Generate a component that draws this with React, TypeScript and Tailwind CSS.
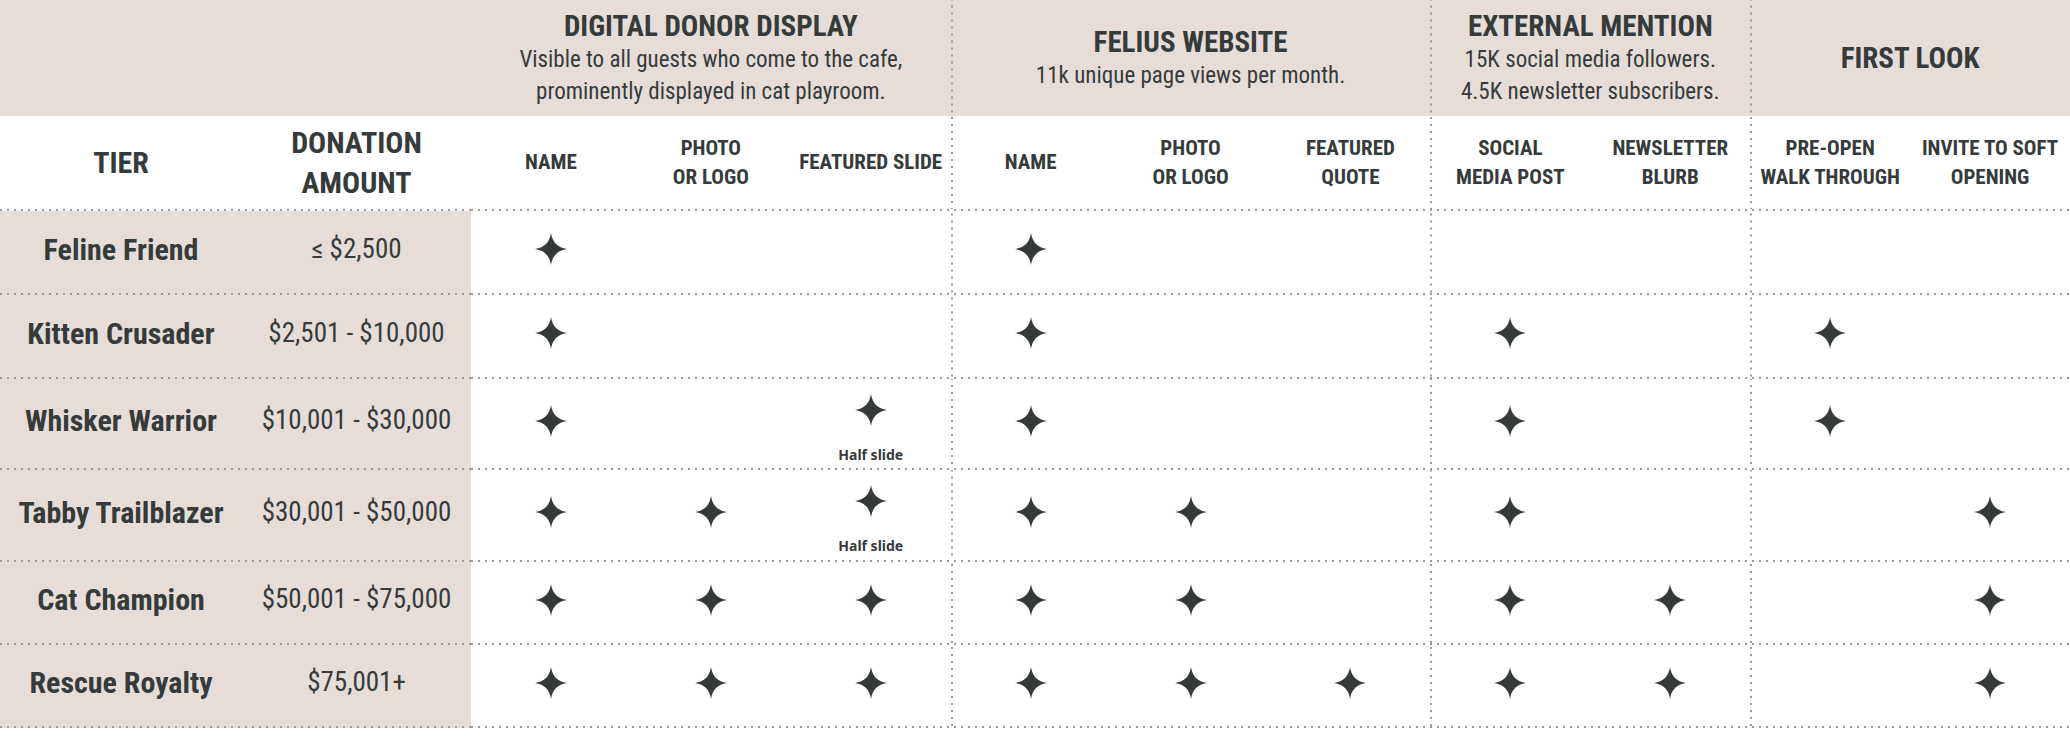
import { Fragment } from "react"

const font = { fontFamily: '"Roboto Condensed", "Liberation Sans Narrow", "DejaVu Sans Condensed", Roboto, sans-serif' }

type Mark = 0 | 1 | "half"

const rows: { tier: string; amount: string; h: string; cells: Mark[] }[] = [
    { tier: "Feline Friend", amount: "≤ $2,500", h: "h-[82px]", cells: [1, 0, 0, 1, 0, 0, 0, 0, 0, 0] },
    { tier: "Kitten Crusader", amount: "$2,501 - $10,000", h: "h-[82px]", cells: [1, 0, 0, 1, 0, 0, 1, 0, 1, 0] },
    { tier: "Whisker Warrior", amount: "$10,001 - $30,000", h: "h-[89px]", cells: [1, 0, "half", 1, 0, 0, 1, 0, 1, 0] },
    { tier: "Tabby Trailblazer", amount: "$30,001 - $50,000", h: "h-[90px]", cells: [1, 1, "half", 1, 1, 0, 1, 0, 0, 1] },
    { tier: "Cat Champion", amount: "$50,001 - $75,000", h: "h-[81px]", cells: [1, 1, 1, 1, 1, 0, 1, 1, 0, 1] },
    { tier: "Rescue Royalty", amount: "$75,001+", h: "h-[81px]", cells: [1, 1, 1, 1, 1, 1, 1, 1, 0, 1] },
]

const subHeads = [
    ["NAME"], ["PHOTO", "OR LOGO"], ["FEATURED SLIDE"],
    ["NAME"], ["PHOTO", "OR LOGO"], ["FEATURED", "QUOTE"],
    ["SOCIAL", "MEDIA POST"], ["NEWSLETTER", "BLURB"],
    ["PRE-OPEN", "WALK THROUGH"], ["INVITE TO SOFT", "OPENING"],
]

// columns that start a new group get a dotted rule on the left
const groupStart = [3, 6, 8]
const vline = "bg-[image:linear-gradient(to_bottom,#9b9b9b_2px,transparent_2px)] bg-[length:2px_7px] bg-repeat-y bg-left"
const cols = "grid grid-cols-[242px_229px_repeat(10,minmax(0,1fr))]"

function Star() {
    return (
        <svg width="32" height="32" viewBox="0 0 32 32" className="text-[#343a3a]">
            <path d="M16 0 Q18 14 32 16 Q18 18 16 32 Q14 18 0 16 Q14 14 16 0Z" fill="currentColor" />
        </svg>
    )
}

function Divider({ shaded = true }: { shaded?: boolean }) {
    const dots = "h-[2px] bg-[image:linear-gradient(to_right,#9b9b9b_2px,transparent_2px)] bg-[length:7px_2px] bg-repeat-x"
    return (
        <div className="flex w-full">
            <div className={`w-[471px] ${dots} ${shaded ? "bg-[#e7ddd8]" : ""}`}></div>
            <div className={`flex-1 ${dots}`}></div>
        </div>
    )
}

function GroupHead({ title, lines, extra }: { title: string; lines: string[]; extra: string }) {
    return (
        <div className={`flex flex-col items-center justify-center text-center ${extra}`}>
            <div className="text-[29px] font-bold leading-[36px]">{title}</div>
            {lines.map((l) => (
                <div key={l} className="text-[23px] font-normal leading-[32px]">{l}</div>
            ))}
        </div>
    )
}

export default function App() {
    return (
        <div className="w-full bg-white text-[#353b3b]" style={font}>
            {/* group band */}
            <div className={`${cols} h-[116px] bg-[#e7ddd8]`}>
                <div className="col-span-2"></div>
                <GroupHead title="DIGITAL DONOR DISPLAY" lines={["Visible to all guests who come to the cafe,", "prominently displayed in cat playroom."]} extra="col-span-3" />
                <GroupHead title="FELIUS WEBSITE" lines={["11k unique page views per month."]} extra={`col-span-3 ${vline}`} />
                <GroupHead title="EXTERNAL MENTION" lines={["15K social media followers.", "4.5K newsletter subscribers."]} extra={`col-span-2 ${vline}`} />
                <GroupHead title="FIRST LOOK" lines={[]} extra={`col-span-2 ${vline}`} />
            </div>

            {/* column headings */}
            <div className={`${cols} h-[93px]`}>
                <div className="flex items-center justify-center text-[30px] font-bold leading-[40px]">TIER</div>
                <div className="flex flex-col items-center justify-center text-center text-[30px] font-bold leading-[40px]">
                    <span>DONATION</span>
                    <span>AMOUNT</span>
                </div>
                {subHeads.map((lines, i) => (
                    <div key={i} className={`flex flex-col items-center justify-center text-center text-[21px] font-bold leading-[29px] ${groupStart.includes(i) ? vline : ""}`}>
                        {lines.map((l) => <span key={l} className="whitespace-nowrap">{l}</span>)}
                    </div>
                ))}
            </div>
            <Divider shaded={false} />

            {rows.map((r) => (
                <Fragment key={r.tier}>
                    <div className={`${cols} ${r.h}`}>
                        <div className="flex items-center justify-center bg-[#e7ddd8] pb-[6px] text-[30px] font-bold">{r.tier}</div>
                        <div className="flex items-center justify-center bg-[#e7ddd8] pb-[6px] text-[27px]">{r.amount}</div>
                        {r.cells.map((c, i) => {
                            const line = groupStart.includes(i) ? vline : ""
                            if (c === "half") {
                                return (
                                    <div key={i} className={`flex flex-col items-center pt-[15px] ${line}`}>
                                        <Star />
                                        <span className="mt-[20px] text-[14px] font-bold leading-[18px]" style={{ fontFamily: '"Noto Sans", sans-serif' }}>Half slide</span>
                                    </div>
                                )
                            }
                            return (
                                <div key={i} className={`flex items-center justify-center pb-[6px] ${line}`}>
                                    {c === 1 && <Star />}
                                </div>
                            )
                        })}
                    </div>
                    <Divider />
                </Fragment>
            ))}
        </div>
    )
}
